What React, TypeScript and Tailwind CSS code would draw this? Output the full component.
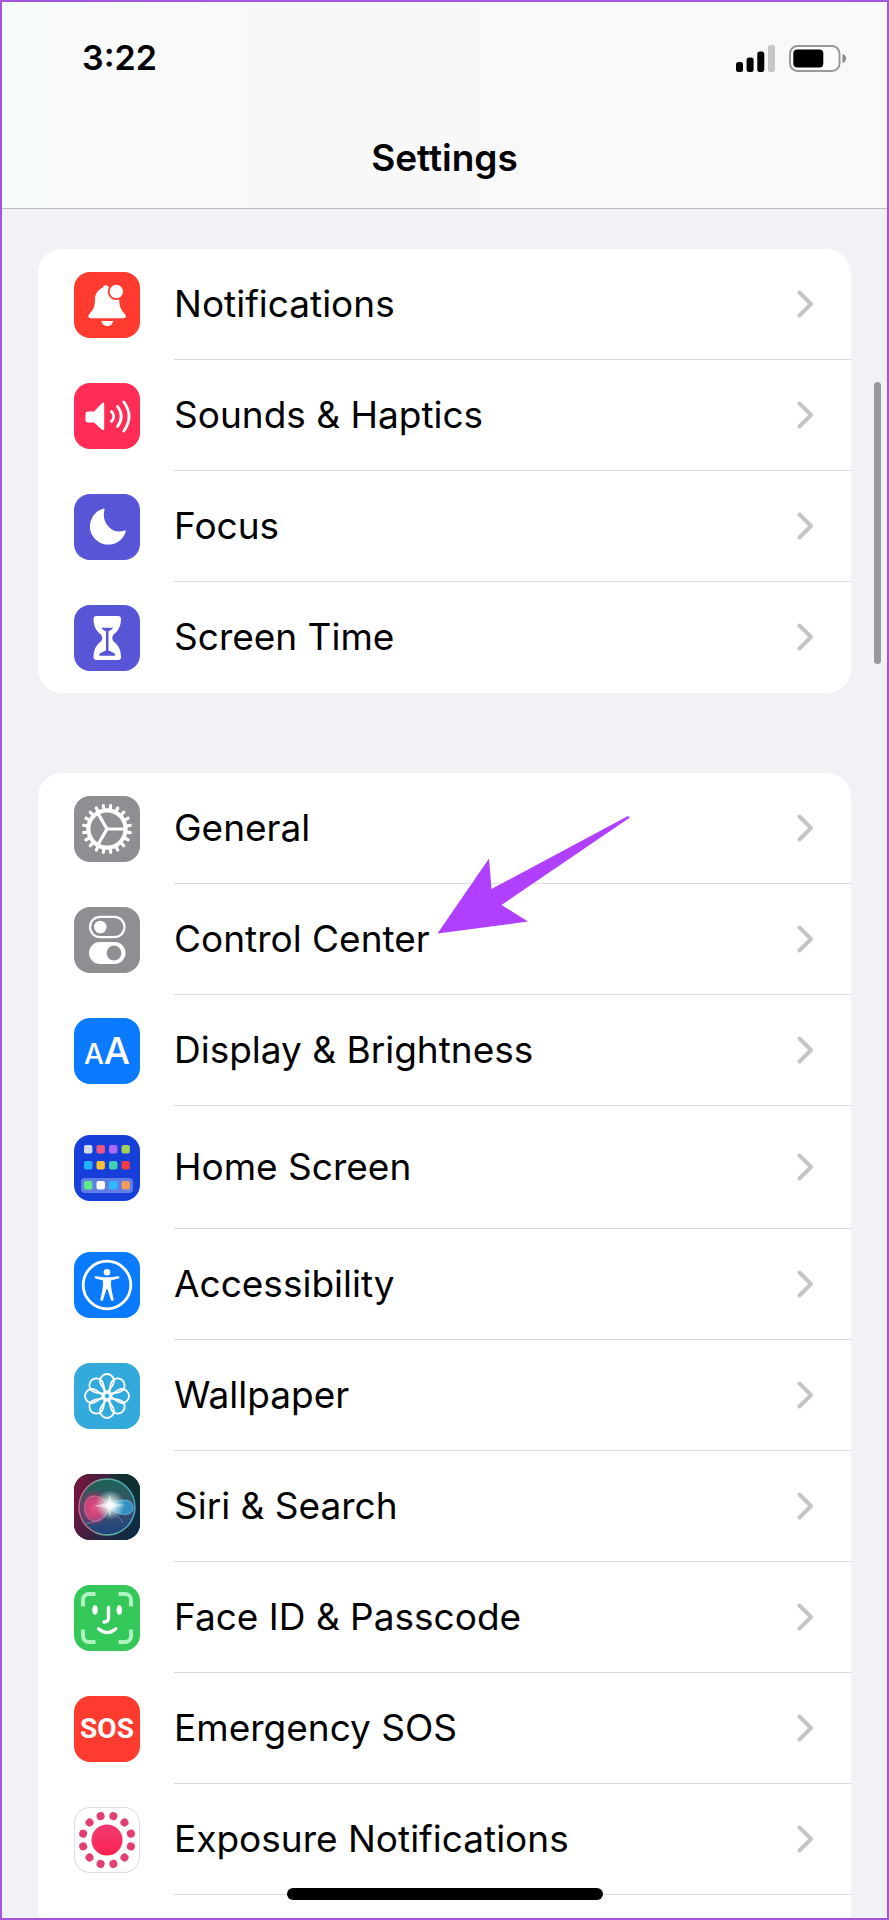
import type { ReactNode } from "react";
import clsx from "clsx";

type Row = {
  label: string;
  icon: ReactNode;
  iconClass: string;
  tall?: boolean;
};

const teeth = Array.from({ length: 20 }, (_, i) => i * 18 + 9);
const petals = [0, 45, 90, 135, 180, 225, 270, 315];
const dots = Array.from({ length: 12 }, (_, i) => i * 30 + 15);

const homeApps = [
  ["#d4d9f3", "#ef5582", "#ae6cff", "#a2cf57"],
  ["#22b1ff", "#ffc033", "#41d0b4", "#ee3b45"],
  ["#5fe987", "#ffffff", "#2fbaff", "#f19d5e"],
];
const homeRowY = [10, 26, 46];

function Glyph({ children }: { children: ReactNode }) {
  return (
    <svg viewBox="0 0 66 66" className="size-full" fill="none" aria-hidden="true">
      {children}
    </svg>
  );
}

function BellIcon() {
  return (
    <Glyph>
      <path
        d="M33 13.300c-2-.6-4 1-4.800 2.600-4.400 2-7.200 6.100-7.200 11.100 0 7-1.500 10.500-5.200 14.500-2.400 2.500-1.500 4.700.7 4.700h33.200c2.200 0 3.100-2.200.7-4.700-3.700-4-5.200-7.500-5.200-14.500z"
        fill="#fff"
      />
      <path d="M27.300 49h12c-.5 3-2.900 5-6 5s-5.500-2-6-5z" fill="#fff" />
      <circle cx="42.300" cy="19.500" r="8.600" fill="#ff3b30" />
      <circle cx="42.300" cy="19.500" r="6.700" fill="#fff" />
    </Glyph>
  );
}

function SpeakerIcon() {
  return (
    <Glyph>
      <path
        d="M14 28.500h6l8-8.200c.9-.9 2.200-.4 2.200.9v24.600c0 1.300-1.300 1.800-2.200.9l-8-7.200h-6a2.500 2.500 0 0 1-2.500-2.500V31a2.500 2.500 0 0 1 2.500-2.500z"
        fill="#fff"
      />
      <g stroke="#fff" strokeWidth="2.800" strokeLinecap="round">
        <path d="M37.500 28.500q4.500 5 0 10" />
        <path d="M43.500 23.500q7.500 10 0 20" />
        <path d="M49.800 19q10.500 14.500 0 29" />
      </g>
    </Glyph>
  );
}

function MoonIcon() {
  return (
    <Glyph>
      <path
        d="M29.300 14.700c.8-.4 1.500.1 1.200 1-1.600 5.500-.7 12 4.300 17.200 4.800 4.800 10.200 5.400 15.700 3.600 1-.3 1.600.4 1.200 1.300A18.300 18.300 0 1 1 29.300 14.700z"
        fill="#fff"
      />
    </Glyph>
  );
}

function HourglassIcon() {
  return (
    <Glyph>
      <path
        d="M22.300 11h21.900c1.700 0 2.800 1.200 2.800 2.800 0 7-2.500 11.800-6.500 15-3 2.500-3 6 0 8.500 4 3.300 6.500 8 6.500 14.900 0 1.700-1.100 2.800-2.800 2.800H22.300c-1.700 0-2.800-1.100-2.800-2.800 0-6.900 2.500-11.600 6.500-14.900 3-2.500 3-6 0-8.500-4-3.200-6.500-8-6.500-15 0-1.600 1.100-2.800 2.800-2.800z"
        fill="#fff"
      />
      <path
        d="M27.500 22.700h11.500c-.8 1.800-2.300 2.500-4.500 3.500v19.300c2 1.200 5 1.800 6.800 4 .3.700 0 1.200-.8 1.200H26c-.8 0-1.100-.5-.8-1.200 1.800-2.200 4.800-2.800 6.800-4V26.200c-2.200-1-3.700-1.700-4.500-3.500z"
        fill="#5856d6"
      />
    </Glyph>
  );
}

function GearIcon() {
  return (
    <Glyph>
      <g stroke="#fff" transform="translate(33 33)">
        {teeth.map((angle) => (
          <path key={angle} d="M0-19V-23.600" strokeWidth="3.200" strokeLinecap="round" transform={`rotate(${angle})`} />
        ))}
        <circle r="18.600" strokeWidth="4.200" />
        {[90, 210, 330].map((angle) => (
          <path key={angle} d="M0 0V-18" strokeWidth="3.200" transform={`rotate(${angle})`} />
        ))}
      </g>
    </Glyph>
  );
}

function TogglesIcon() {
  return (
    <Glyph>
      <rect x="16" y="9.800" width="34.500" height="20.400" rx="10.200" stroke="#fff" strokeWidth="2.200" />
      <circle cx="26.300" cy="20" r="6.300" fill="#fff" />
      <rect x="15" y="35" width="36.500" height="22" rx="11" fill="#fff" />
      <circle cx="40" cy="46" r="7.400" fill="#8e8e93" />
    </Glyph>
  );
}

function HomeIcon() {
  return (
    <Glyph>
      <rect x="7" y="43" width="52" height="15" rx="4" fill="#fff" fillOpacity="0.32" />
      {homeApps.map((colors, row) =>
        colors.map((color, col) => (
          <rect key={`${row}-${col}`} x={10 + col * 12.5} y={homeRowY[row]} width="8.400" height="8.400" rx="2" fill={color} />
        ))
      )}
    </Glyph>
  );
}

function AccessibilityIcon() {
  return (
    <Glyph>
      <circle cx="33" cy="33" r="23.800" stroke="#fff" strokeWidth="2.800" />
      <circle cx="33" cy="20.300" r="3.300" fill="#fff" />
      <path
        d="M22 24.200 29 25.300h8l7-1.100c1.700-.2 2 1.900.4 2.300l-6.700 1.700c-.5.100-.7.400-.7.900 0 5.500.4 9 2.600 18 .4 1.900-1.900 2.500-2.600.8L33.600 37.500c-.2-.6-1-.6-1.200 0L29 47.900c-.7 1.700-3 1.100-2.600-.8 2.200-9 2.600-12.500 2.600-18 0-.5-.2-.8-.7-.9l-6.700-1.700c-1.600-.4-1.300-2.500.4-2.300z"
        fill="#fff"
      />
    </Glyph>
  );
}

function FlowerIcon() {
  return (
    <Glyph>
      <g stroke="#fff" strokeWidth="1.800" transform="translate(33 33)">
        {petals.map((angle) => (
          <path
            key={angle}
            d="M0-3.300C-2-6.500-7-10.500-7-15a7 7 0 0 1 14 0C7-10.500 2-6.500 0-3.300z"
            transform={`rotate(${angle})`}
          />
        ))}
        <circle r="3.400" />
      </g>
    </Glyph>
  );
}

function SiriIcon() {
  return (
    <Glyph>
      <defs>
        <linearGradient id="siri-bg" x1="0" y1="0.300" x2="1" y2="0.600">
          <stop offset="0" stopColor="#74163c" />
          <stop offset="0.500" stopColor="#2c2443" />
          <stop offset="1" stopColor="#0d2c43" />
        </linearGradient>
        <linearGradient id="siri-orb" x1="0.500" y1="0" x2="0.500" y2="1">
          <stop offset="0" stopColor="#1b6456" />
          <stop offset="0.500" stopColor="#3f5068" />
          <stop offset="1" stopColor="#1d4380" />
        </linearGradient>
        <linearGradient id="siri-ring" x1="0" y1="0.500" x2="1" y2="0.500">
          <stop offset="0" stopColor="#d65c83" />
          <stop offset="0.500" stopColor="#63b39a" />
          <stop offset="1" stopColor="#4aa5c9" />
        </linearGradient>
        <radialGradient id="siri-pink">
          <stop offset="0" stopColor="#e94a7f" />
          <stop offset="0.500" stopColor="#c92f66" stopOpacity="0.800" />
          <stop offset="1" stopColor="#a3265e" stopOpacity="0" />
        </radialGradient>
        <radialGradient id="siri-glow">
          <stop offset="0" stopColor="#fff" />
          <stop offset="0.250" stopColor="#fff" stopOpacity="0.850" />
          <stop offset="1" stopColor="#d6fff4" stopOpacity="0" />
        </radialGradient>
      </defs>
      <rect width="66" height="66" fill="url(#siri-bg)" />
      <path d="M36 0h30v34z" fill="#0c332d" fillOpacity="0.700" />
      <circle cx="33" cy="33" r="28" fill="url(#siri-orb)" stroke="url(#siri-ring)" strokeWidth="1.500" />
      <ellipse cx="20" cy="34" rx="15" ry="19" fill="url(#siri-pink)" />
      <path d="M36 33C29 20 13 18 11 30s6 19 13 17 9-8 12-14z" fill="#ed5790" fillOpacity="0.400" stroke="#f4a0bf" strokeOpacity="0.500" />
      <path d="M34 32c6-6 24-10 25 1s-17 9-25-1z" fill="#31a9e9" fillOpacity="0.700" stroke="#8adcff" strokeOpacity="0.600" />
      <path d="M36 33c3 5 8 8 13 16M36 33c-4 9-15 17-24 16" stroke="#91a8e8" strokeOpacity="0.500" />
      <circle cx="36" cy="31" r="15" fill="url(#siri-glow)" />
      <path d="m36 20 2 9 13 2-13 3-2 9-3-9-14-2 14-3z" fill="#fff" fillOpacity="0.450" />
    </Glyph>
  );
}

function FaceIcon() {
  return (
    <Glyph>
      <path
        d="M9 21.500V15a6 6 0 0 1 6-6h6.500M44.500 9H51a6 6 0 0 1 6 6v6.500M57 44.500V51a6 6 0 0 1-6 6h-6.500M21.500 57H15a6 6 0 0 1-6-6v-6.500"
        stroke="#b1f3c0"
        strokeWidth="4"
      />
      <ellipse cx="21" cy="25" rx="2.700" ry="4.800" fill="#fff" />
      <ellipse cx="45.300" cy="25" rx="2.700" ry="4.800" fill="#fff" />
      <path d="M34.500 22.500v10.500c0 2.800-1.500 4-4.500 4" stroke="#fff" strokeWidth="3.400" strokeLinecap="round" />
      <path d="M24.500 43.800q8.700 7.600 17.400 0" stroke="#fff" strokeWidth="3.200" strokeLinecap="round" />
    </Glyph>
  );
}

function ExposureIcon() {
  return (
    <Glyph>
      <defs>
        <linearGradient id="exposure" x1="0" y1="0" x2="0" y2="1">
          <stop offset="0" stopColor="#ee3a71" />
          <stop offset="1" stopColor="#ff2450" />
        </linearGradient>
      </defs>
      <circle cx="33" cy="33" r="15.500" fill="url(#exposure)" />
      <g transform="translate(33 33)" fill="#e23f6f">
        {dots.map((angle) => (
          <circle key={angle} cy="-24.700" r="4" transform={`rotate(${angle})`} />
        ))}
      </g>
    </Glyph>
  );
}

const alerts: Row[] = [
  { label: "Notifications", icon: <BellIcon />, iconClass: "bg-[#ff3b30]" },
  { label: "Sounds & Haptics", icon: <SpeakerIcon />, iconClass: "bg-[#ff2d55]" },
  { label: "Focus", icon: <MoonIcon />, iconClass: "bg-[#5856d6]" },
  { label: "Screen Time", icon: <HourglassIcon />, iconClass: "bg-[#5856d6]" },
];

const system: Row[] = [
  { label: "General", icon: <GearIcon />, iconClass: "bg-[#8e8e93]" },
  { label: "Control Center", icon: <TogglesIcon />, iconClass: "bg-[#8e8e93]" },
  {
    label: "Display & Brightness",
    icon: (
      <span className="flex items-baseline leading-none font-medium text-white" aria-hidden="true">
        <span className="text-[28px]">A</span>
        <span className="text-[37px]">A</span>
      </span>
    ),
    iconClass: "bg-[#0a7aff]",
  },
  { label: "Home Screen", icon: <HomeIcon />, iconClass: "bg-[#163fd9]", tall: true },
  { label: "Accessibility", icon: <AccessibilityIcon />, iconClass: "bg-[#0a7aff]" },
  { label: "Wallpaper", icon: <FlowerIcon />, iconClass: "bg-[#34aadc]" },
  { label: "Siri & Search", icon: <SiriIcon />, iconClass: "bg-[#1c1c30]" },
  { label: "Face ID & Passcode", icon: <FaceIcon />, iconClass: "bg-[#34c759]" },
  {
    label: "Emergency SOS",
    icon: (
      <span className="font-['Roboto',sans-serif] text-[28px] leading-none font-bold text-white" aria-hidden="true">
        SOS
      </span>
    ),
    iconClass: "bg-[#ff3b30]",
  },
  { label: "Exposure Notifications", icon: <ExposureIcon />, iconClass: "bg-white ring-1 ring-inset ring-[#dedee0]" },
];

function Chevron() {
  return (
    <svg viewBox="0 0 18 28" className="h-7 w-[18px] shrink-0" fill="none" aria-hidden="true">
      <path d="m2.500 2.500 11.500 11.500L2.500 25.500" stroke="#c5c5c7" strokeWidth="4" strokeLinecap="round" strokeLinejoin="round" />
    </svg>
  );
}

function Pointer() {
  return (
    <svg
      viewBox="0 0 196 120"
      className="pointer-events-none absolute -top-[69px] left-[398px] z-10 h-[120px] w-[196px]"
      aria-hidden="true"
    >
      <path d="M1.500 118.500 53 43.500l2.500 30.500L192 1l2 1.500L65.500 90 92 106.500z" fill="#b03fff" />
    </svg>
  );
}

function SettingsList({ rows, open }: { rows: Row[]; open?: boolean }) {
  return (
    <ul className={clsx("bg-white", open ? "grow rounded-t-3xl" : "rounded-3xl")}>
      {rows.map((row, i) => (
        <li key={row.label} className="relative">
          <button type="button" className="flex w-full items-center pl-9 text-left">
            <span className={clsx("flex size-[66px] shrink-0 items-center justify-center overflow-hidden rounded-2xl", row.iconClass)}>
              {row.icon}
            </span>
            <span
              className={clsx(
                "ml-[34px] flex grow items-center justify-between border-b pr-9",
                row.tall ? "h-[123px]" : "h-[111px]",
                !open && i === rows.length - 1 ? "border-transparent" : "border-[#dcdcde]"
              )}
            >
              <span className="text-[37px] leading-[44px]">{row.label}</span>
              <Chevron />
            </span>
          </button>
          {row.label === "Control Center" && <Pointer />}
        </li>
      ))}
    </ul>
  );
}

function StatusBar() {
  return (
    <div className="flex h-28 items-center justify-between pr-10 pl-20">
      <time className="text-[34px] leading-[44px] font-semibold">3:22</time>
      <div className="flex items-center gap-3.5">
        <svg viewBox="0 0 39 27" className="h-[27px] w-[39px]" role="img" aria-label="Signal">
          <rect x="0" y="17" width="7" height="10" rx="2.500" />
          <rect x="10.600" y="12.500" width="7" height="14.500" rx="2.500" />
          <rect x="21.300" y="6.500" width="7" height="20.500" rx="2.500" />
          <rect x="32" y="0" width="7" height="27" rx="2.500" fill="#c6c6c6" />
        </svg>
        <svg viewBox="0 0 58 27" className="h-[27px] w-[58px]" role="img" aria-label="Battery">
          <rect x="1" y="1" width="49.500" height="25" rx="7.500" fill="#fcfcfc" stroke="#999" strokeWidth="2" />
          <rect x="4.300" y="4.500" width="30" height="18" rx="4" />
          <path d="M53.500 9c2 .5 3.500 2.300 3.500 4.500s-1.500 4-3.500 4.500z" fill="#888" />
        </svg>
      </div>
    </div>
  );
}

export default function App() {
  return (
    <div className="relative flex h-screen flex-col overflow-hidden border-2 border-[#a455d8] bg-[#f2f1f6] font-['Inter',sans-serif] text-black">
      <header className="shrink-0 border-b border-[#bcbcc0] bg-linear-to-r from-[#f8fcf9] via-[#f8f8f8] via-30% to-[#f9f9f9]">
        <StatusBar />
        <div className="flex h-[94px] justify-center pt-[22px]">
          <h1 className="text-[37px] leading-[44px] font-semibold">Settings</h1>
        </div>
      </header>

      <main className="flex min-h-0 grow flex-col gap-20 px-9 pt-10">
        <SettingsList rows={alerts} />
        <SettingsList rows={system} open />
      </main>

      <div className="absolute top-[380px] right-1.5 h-[282px] w-[7px] rounded-full bg-[#98989d]" />
      <div className="absolute bottom-[18px] left-1/2 h-3 w-[316px] -translate-x-1/2 rounded-full bg-black" />
    </div>
  );
}
